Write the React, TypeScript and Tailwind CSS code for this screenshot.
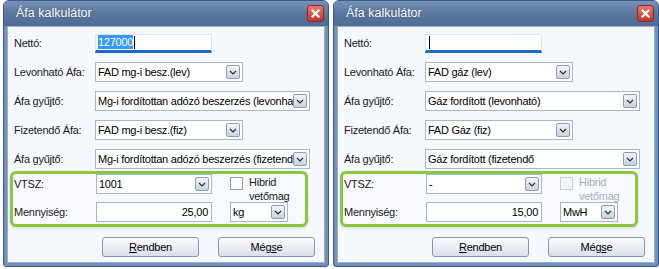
import React from "react";

const font = { fontFamily: '"Liberation Sans", Arial, sans-serif' };

function DropBtn() {
  return (
    <div className="flex h-[14px] w-[14px] shrink-0 items-center justify-center rounded-[2px] border border-[#8e9db4] bg-gradient-to-b from-[#f4f6fa] to-[#c8d2e0]">
      <svg width="8" height="5" viewBox="0 0 8 5">
        <path d="M1 1 L4 4 L7 1" fill="none" stroke="#2b2b2b" strokeWidth="1.2" />
      </svg>
    </div>
  );
}

function Select({ w, text }: { w: string; text: string }) {
  return (
    <div className={`flex h-[20px] ${w} items-center border border-[#a9b6c8] bg-white pl-[2px] pr-[2px]`}>
      <span className="flex-1 overflow-hidden whitespace-nowrap text-[11px] text-black">{text}</span>
      <DropBtn />
    </div>
  );
}

function Row({ label, children }: { label: string; children: React.ReactNode }) {
  return (
    <div className="flex h-[20px] items-center">
      <span className="w-[81px] shrink-0 text-[11px] text-[#1a1a1a]">{label}</span>
      {children}
    </div>
  );
}

function Dialog({
  netto,
  lev,
  gy1,
  fiz,
  gy2,
  vtsz,
  qty,
  unit,
  disabled,
}: {
  netto: string;
  lev: string;
  gy1: string;
  fiz: string;
  gy2: string;
  vtsz: string;
  qty: string;
  unit: string;
  disabled: boolean;
}) {
  return (
    <div className="flex h-[267px] w-[326px] flex-col overflow-hidden rounded-t-[6px] rounded-b-[3px] border border-[#3d5a86] bg-[#7290bb]">
      <div className="flex h-[25px] shrink-0 items-center justify-between bg-gradient-to-b from-[#7892bb] via-[#5a779f] to-[#4f6c97] pl-[12px] pr-[4px]">
        <span className="text-[12.5px] tracking-normal text-white [text-shadow:0_0_2px_rgba(0,0,0,0.4)]">Áfa kalkulátor</span>
        <div className="flex h-[17px] w-[17px] items-center justify-center rounded-[3px] border border-[#8b2a22] bg-gradient-to-b from-[#e9786c] to-[#c2352b]">
          <svg width="9" height="9" viewBox="0 0 9 9">
            <path d="M1.5 1.5 L7.5 7.5 M7.5 1.5 L1.5 7.5" stroke="white" strokeWidth="2.2" strokeLinecap="square" />
          </svg>
        </div>
      </div>
      <div className="mx-[3px] mb-[3px] flex flex-1 flex-col border border-[#9bb0cd] bg-[#f5f8fc] pl-[6px] pt-[6px]">
        <div className="flex flex-col gap-[9px]">
          <Row label="Nettó:">
            <div className="flex h-[19px] w-[117px] items-center border border-[#dfe5ee] border-b-[3px] border-b-[#1a6bc2] bg-white pl-[2px]">
              {netto ? (
                <span className="bg-[#3399ff] text-[11px] leading-[14px] text-white">{netto}</span>
              ) : null}
              <span className="ml-[1px] h-[13px] w-[1px] bg-black" />
            </div>
          </Row>
          <Row label="Levonható Áfa:">
            <Select w="w-[148px]" text={lev} />
          </Row>
          <Row label="Áfa gyűjtő:">
            <Select w="w-[215px]" text={gy1} />
          </Row>
          <Row label="Fizetendő Áfa:">
            <Select w="w-[148px]" text={fiz} />
          </Row>
          <Row label="Áfa gyűjtő:">
            <Select w="w-[215px]" text={gy2} />
          </Row>
        </div>
        <div className="ml-[-4px] mt-[2px] flex h-[56px] w-[298px] flex-col gap-[8px] rounded-[6px] border-[3px] border-[#8cc63f] bg-[#f7f9fc] pl-[1px] shadow-[0_1px_3px_rgba(0,0,0,0.15)]">
          <div className="flex h-[20px] items-center">
            <span className="w-[82px] shrink-0 text-[11px] text-[#1a1a1a]">VTSZ:</span>
            <Select w="w-[116px]" text={vtsz} />
            <div className="ml-[18px] flex items-start self-start pt-[3px]">
              <div className={`h-[13px] w-[13px] border ${disabled ? "border-[#c9d0da] bg-[#f3f5f8]" : "border-[#8e9db4] bg-white"}`} />
              <div className={`ml-[6px] mt-[-2px] text-[11px] leading-[14px] ${disabled ? "text-[#a7afba]" : "text-[#1a1a1a]"}`}>
                Hibrid
                <br />
                vetőmag
              </div>
            </div>
          </div>
          <div className="flex h-[20px] items-center">
            <span className="w-[82px] shrink-0 text-[11px] text-[#1a1a1a]">Mennyiség:</span>
            <div className="flex h-[20px] w-[116px] items-center justify-end border border-[#a9b6c8] bg-white pr-[3px] text-[11px]">
              {qty}
            </div>
            <div className="ml-[18px]">
              <Select w="w-[58px]" text={unit} />
            </div>
          </div>
        </div>
        <div className="ml-[88px] mt-[10px] flex gap-[19px]">
          <button className="flex h-[20px] w-[97px] items-center justify-center rounded-[3px] border border-[#8796ad] bg-gradient-to-b from-[#fbfcfe] to-[#d9e0ea] text-[11px] text-black">
            <span>
              <span className="underline">R</span>endben
            </span>
          </button>
          <button className="flex h-[20px] w-[97px] items-center justify-center rounded-[3px] border border-[#8796ad] bg-gradient-to-b from-[#fbfcfe] to-[#d9e0ea] text-[11px] text-black">
            <span>
              Még<span className="underline">s</span>e
            </span>
          </button>
        </div>
      </div>
    </div>
  );
}

export default function App() {
  return (
    <div className="flex h-[269px] w-[659px] gap-[4px] bg-white pl-[3px] tracking-[-0.25px]" style={font}>
      <Dialog
        netto="127000"
        lev="FAD mg-i besz.(lev)"
        gy1="Mg-i fordítottan adózó beszerzés (levonható)"
        fiz="FAD mg-i besz.(fiz)"
        gy2="Mg-i fordítottan adózó beszerzés (fizetendő)"
        vtsz="1001"
        qty="25,00"
        unit="kg"
        disabled={false}
      />
      <Dialog
        netto=""
        lev="FAD gáz (lev)"
        gy1="Gáz fordított (levonható)"
        fiz="FAD Gáz (fiz)"
        gy2="Gáz fordított (fizetendő"
        vtsz="-"
        qty="15,00"
        unit="MwH"
        disabled={true}
      />
    </div>
  );
}
